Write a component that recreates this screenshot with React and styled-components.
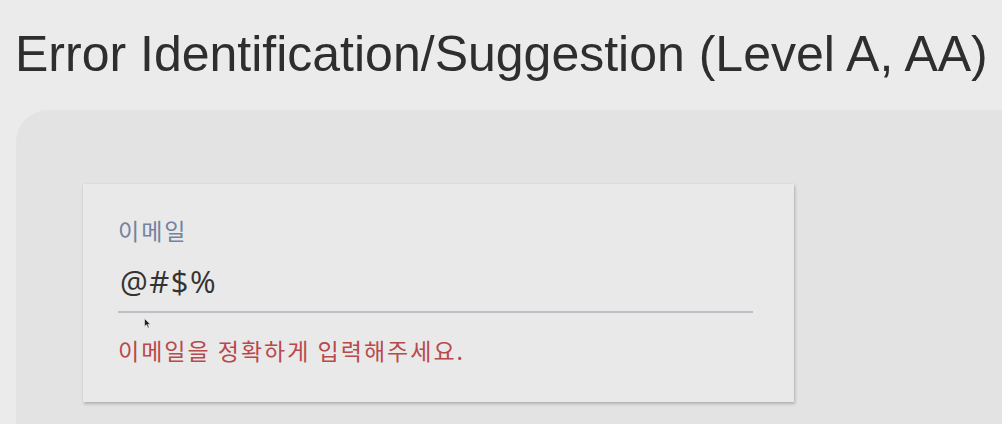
import React from 'react';
import styled, { createGlobalStyle } from 'styled-components';

const GlobalStyle = createGlobalStyle`
    html, body {
        margin: 0;
        padding: 0;
        background: #ebebeb;
        overflow: hidden;
    }
`

const Page = styled.div`
    width: 1002px;
    height: 424px;
    overflow: hidden;
    display: flex;
    flex-direction: column;
`

const Title = styled.h1`
    margin: 0;
    padding: 24px 0 0 15px;
    height: 84px;
    box-sizing: border-box;
    font-family: "Liberation Sans", Arial, sans-serif;
    font-weight: 400;
    font-size: 50px;
    line-height: 60px;
    color: #2e2e2e;
    white-space: nowrap;
`

const Panel = styled.section`
    flex: 1;
    margin: 26px 0 0 16px;
    background: #e3e3e3;
    border-top-left-radius: 32px;
    padding: 74px 0 0 67px;
`

const Card = styled.div`
    width: 711px;
    height: 218px;
    box-sizing: border-box;
    background: #e9e9e9;
    box-shadow: 1px 2px 3px rgba(0, 0, 0, 0.22), 0 0 2px rgba(0, 0, 0, 0.06);
    padding: 31px 41px 0 35px;
    position: relative;
`

const Label = styled.div`
    font-family: "Noto Sans CJK KR", "Noto Sans", sans-serif;
    font-size: 23px;
    line-height: 30px;
    letter-spacing: 2px;
    color: #7282a0;
`

const Value = styled.div`
    margin-top: 16px;
    padding: 0 0 10px 2px;
    font-family: "Open Sans", "Noto Sans", sans-serif;
    font-size: 31px;
    font-weight: 500;
    line-height: 40px;
    letter-spacing: 1.5px;
    color: #333333;
    border-bottom: 2px solid #bcbfc5;
`

const ErrorText = styled.div`
    margin-top: 22px;
    font-family: "Noto Sans CJK KR", "Noto Sans", sans-serif;
    font-size: 23px;
    line-height: 30px;
    letter-spacing: 2px;
    color: #b8494c;
`

const Pointer = styled.svg`
    position: absolute;
    left: 61px;
    top: 134px;
`

const App = () => (
    <Page>
        <GlobalStyle />
        <Title>Error Identification/Suggestion (Level A, AA)</Title>
        <Panel>
            <Card>
                <Label>이메일</Label>
                <Value>@#$%</Value>
                <ErrorText>이메일을 정확하게 입력해주세요.</ErrorText>
                {/* mouse pointer left in the capture */}
                <Pointer width="7" height="11" viewBox="0 0 7 11">
                    <path d="M0.5 0.5 L0.5 8.5 L2.5 6.8 L4 10 L5.2 9.4 L3.8 6.4 L6.3 6.3 Z" fill="#222" stroke="#eee" strokeWidth="0.6" />
                </Pointer>
            </Card>
        </Panel>
    </Page>
);

export default App;
